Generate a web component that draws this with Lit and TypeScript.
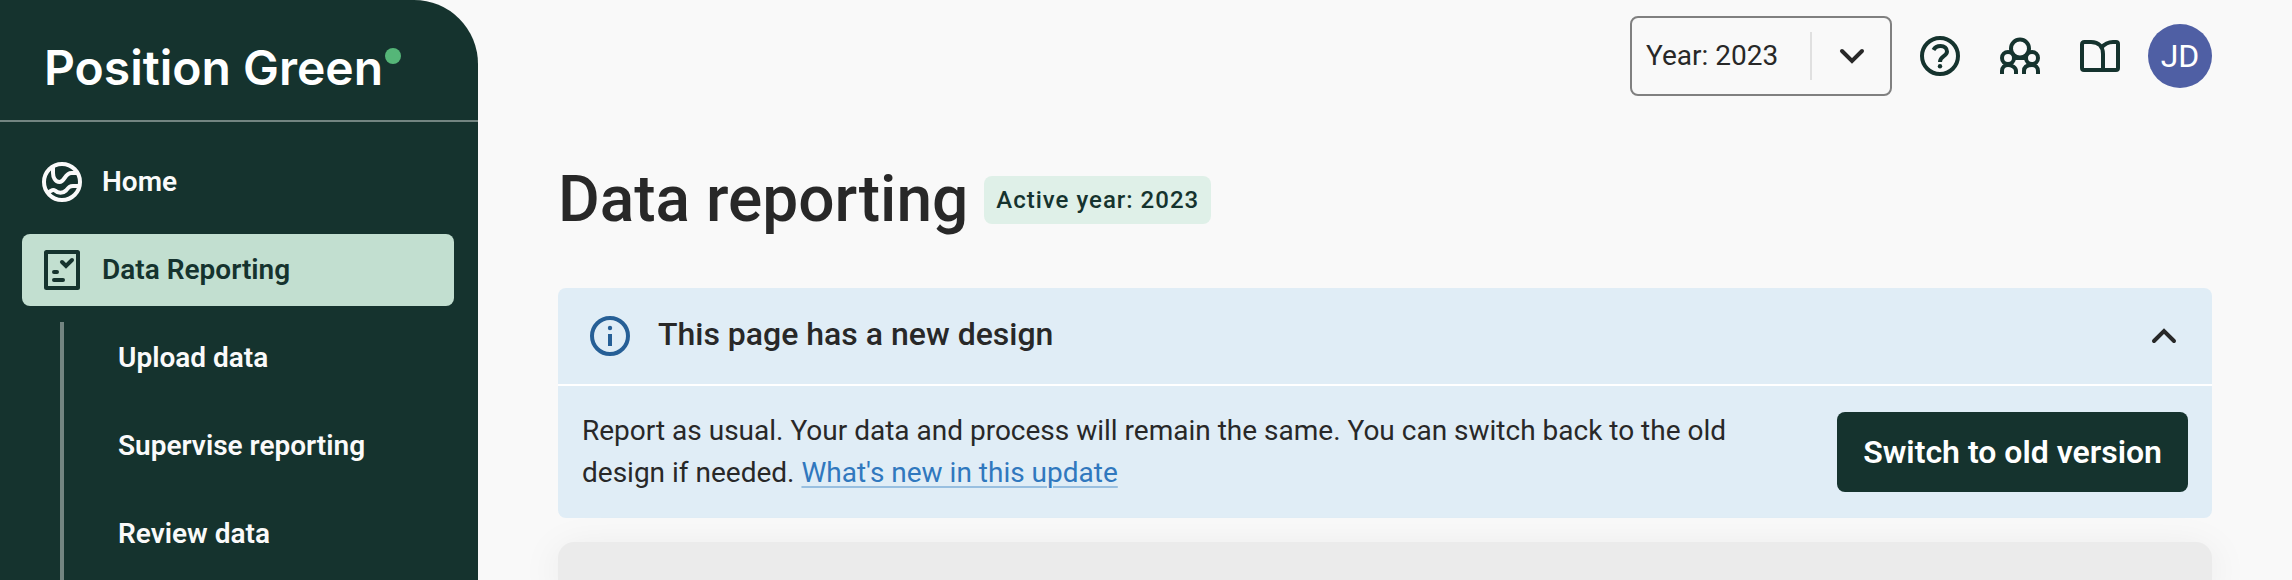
import { LitElement, html, css, svg } from "lit";
import { customElement, property, state } from "lit/decorators.js";
import { classMap } from "lit/directives/class-map.js";

const icons = {
  home: svg`<circle cx="24" cy="24" r="18"/><path d="M15 9v6c0 4 2 9 6.500 9 5.500 0 5-9 12-9h6"/><path d="M10 35c2-2 5-4 7-2.500 3 3 8 3 11 0 3-3.500 4-4.500 7-4.500h5.500"/>`,
  report: svg`<rect x="8" y="6" width="32" height="36" rx="0.500"/><path stroke-linecap="round" d="M24 16l4 4 6-6M16 26h3M16 34h9"/>`,
  help: svg`<circle cx="24" cy="24" r="18"/><path d="M17.500 18c1.500-3 4-4 7-4 4 0 6.500 2 6.500 5.500 0 5-7 4.500-7 10.500"/><circle class="solid" cx="24" cy="34.200" r="2.200"/>`,
  people: svg`<circle cx="24" cy="16.500" r="9"/><circle cx="12" cy="26" r="6"/><circle cx="36" cy="26" r="6"/><path d="M6 42v-3c0-3.500 2.500-6 6-6s8 2.500 8 6v3M28 42v-3c0-3.500 2.500-6 8-6 3.500 0 6 2.500 6 6v3M17 26h14"/>`,
  book: svg`<path stroke-linejoin="round" d="M27 38V22c0-7-4-12-12-12H8.500c-1.500 0-2.500 1-2.500 2.500V36c0 1.200.8 2 2 2h32c1.200 0 2-.8 2-2V12c0-1.200-.8-2-2-2h-3c-5 0-9 2.500-12 6"/>`,
  info: svg`<circle cx="24" cy="24" r="18"/><circle class="solid" cx="24" cy="16" r="2.200"/><path d="M24 22v12"/>`,
  down: svg`<path stroke-linecap="round" d="M14 19l10 10 10-10"/>`,
  up: svg`<path stroke-linecap="round" d="M14 29l10-10 10 10"/>`,
};
type IconName = keyof typeof icons;

@customElement("pg-icon")
class PgIcon extends LitElement {
  static styles = css`
    :host { display: block; width: 48px; height: 48px; flex: none; }
    svg { display: block; width: 100%; height: 100%; fill: none; stroke: currentColor; stroke-width: 4; }
    .solid { fill: currentColor; stroke: none; }
  `;
  @property() name: IconName = "home";
  render() {
    return html`<svg viewBox="0 0 48 48" aria-hidden="true">${icons[this.name]}</svg>`;
  }
}

@customElement("pg-sidebar")
class PgSidebar extends LitElement {
  static styles = css`
    :host { display: flex; flex-direction: column; background: #15332e; color: #fafafa; border-top-right-radius: 64px; }
    .brand { display: flex; gap: 2px; padding: 38px 0 22px 44px; border-bottom: 2px solid #738581;
      font: 600 48px/60px Inter, sans-serif; color: #fff; text-decoration: none; white-space: nowrap; }
    .dot { width: 16px; height: 16px; margin-top: 10px; border-radius: 50%; background: #55b678; }
    nav { flex: 1; display: flex; flex-direction: column; gap: 16px; padding: 24px 24px 0 22px; }
    a { color: inherit; text-decoration: none; }
    .item { display: flex; align-items: center; gap: 16px; height: 72px; padding: 0 16px; border-radius: 8px; }
    .active { background: #c2dfd0; color: #15332e; }
    .sub { flex: 1; display: flex; flex-direction: column; gap: 16px; margin: 0 0 0 38px; padding: 0 0 0 54px; border-left: 4px solid #738581; list-style: none; }
    .sub a { display: flex; align-items: center; height: 72px; }
  `;
  private items: { label: string; icon: IconName; active: boolean }[] = [
    { label: "Home", icon: "home", active: false },
    { label: "Data Reporting", icon: "report", active: true },
  ];
  private sub = ["Upload data", "Supervise reporting", "Review data"];
  render() {
    return html`
      <a class="brand" href="#">Position Green<span class="dot"></span></a>
      <nav aria-label="Main">
        ${this.items.map(
          (i) => html`<a href="#" class=${classMap({ item: true, active: i.active })}
            ><pg-icon name=${i.icon}></pg-icon>${i.label}</a>`
        )}
        <ul class="sub">${this.sub.map((s) => html`<li><a href="#">${s}</a></li>`)}</ul>
      </nav>`;
  }
}

@customElement("pg-topbar")
class PgTopbar extends LitElement {
  static styles = css`
    :host { display: flex; justify-content: flex-end; align-items: center; gap: 24px; color: #15332e; }
    .year { position: relative; display: block; color: #282828; }
    select { appearance: none; display: block; width: 262px; height: 80px; padding: 0 96px 0 14px; border: 2px solid #808080; border-radius: 8px; background: none; font: inherit; color: inherit; }
    .arrow { position: absolute; inset: 16px 16px 16px auto; display: flex; align-items: center; padding-left: 16px; border-left: 2px solid #e0e0e0; pointer-events: none; }
    .tools { display: flex; align-items: center; gap: 32px; }
    button { padding: 0; border: 0; background: none; color: inherit; font: inherit; }
    .avatar { width: 64px; height: 64px; margin-left: -8px; border-radius: 50%; background: #4f5fa4; color: #fff; font-size: 32px; }
  `;
  render() {
    return html`
      <label class="year">
        <select aria-label="Reporting year"><option>Year: 2023</option></select>
        <span class="arrow"><pg-icon name="down"></pg-icon></span>
      </label>
      <div class="tools">
        <button aria-label="Help"><pg-icon name="help"></pg-icon></button>
        <button aria-label="People"><pg-icon name="people"></pg-icon></button>
        <button aria-label="Guide"><pg-icon name="book"></pg-icon></button>
        <button class="avatar" aria-label="Account">JD</button>
      </div>`;
  }
}

@customElement("pg-banner")
class PgBanner extends LitElement {
  static styles = css`
    :host { display: block; background: #e0edf6; border-radius: 8px; }
    .head { display: flex; align-items: center; gap: 24px; height: 96px; padding: 0 24px 0 28px; border-bottom: 2px solid #fff; }
    .info { color: #265f96; }
    h2 { flex: 1; margin: 0; padding-bottom: 4px; font-size: 32px; line-height: 40px; font-weight: 500; }
    button { border: 0; font: inherit; color: inherit; }
    .toggle { padding: 0; background: none; }
    .body { display: flex; align-items: center; justify-content: space-between; gap: 96px; padding: 24px; }
    p { margin: 0; line-height: 42px; }
    a { color: #3078be; text-decoration-color: #98bfe0; text-decoration-thickness: 2px; text-underline-offset: 4px; }
    .switch { flex: none; height: 80px; padding: 0 26px; border-radius: 8px; background: #15332e; color: #fff; font-size: 32px; font-weight: 600; }
  `;
  @state() private open = true;
  render() {
    return html`
      <div class="head">
        <pg-icon class="info" name="info"></pg-icon>
        <h2>This page has a new design</h2>
        <button class="toggle" aria-label="Toggle details" aria-expanded=${this.open} @click=${() => (this.open = !this.open)}>
          <pg-icon name=${this.open ? "up" : "down"}></pg-icon>
        </button>
      </div>
      ${this.open
        ? html`<div class="body">
            <p>Report as usual. Your data and process will remain the same. You can switch back to the old design if needed. <a href="#">What's new in this update</a></p>
            <button class="switch">Switch to old version</button>
          </div>`
        : null}`;
  }
}

@customElement("app-root")
class AppRoot extends LitElement {
  static styles = css`
    :host { display: grid; grid-template-columns: 478px minmax(0, 1fr); min-height: 100vh; background: #f9f9f9; color: #282828; font: 400 28px/42px Roboto, sans-serif; }
    pg-sidebar { font-weight: 600; }
    main { display: flex; flex-direction: column; padding: 16px 80px 0; overflow: hidden; }
    .title { display: flex; align-items: center; gap: 16px; margin: 64px 0 48px; }
    h1 { margin: 0; font-size: 64px; line-height: 80px; font-weight: 500; }
    .badge { padding: 0 12px; border-radius: 8px; background: #dff0e8; color: #15332e; font-size: 24px; line-height: 48px; font-weight: 500; letter-spacing: 1px; }
    .card { flex: 1; min-height: 38px; margin-top: 24px; border-radius: 16px 16px 0 0; background: #ebebeb; box-shadow: 0 8px 40px rgba(0, 0, 0, 0.08); }
  `;
  render() {
    return html`
      <pg-sidebar></pg-sidebar>
      <main>
        <pg-topbar></pg-topbar>
        <div class="title"><h1>Data reporting</h1><span class="badge">Active year: 2023</span></div>
        <pg-banner></pg-banner>
        <section class="card"></section>
      </main>`;
  }
}
